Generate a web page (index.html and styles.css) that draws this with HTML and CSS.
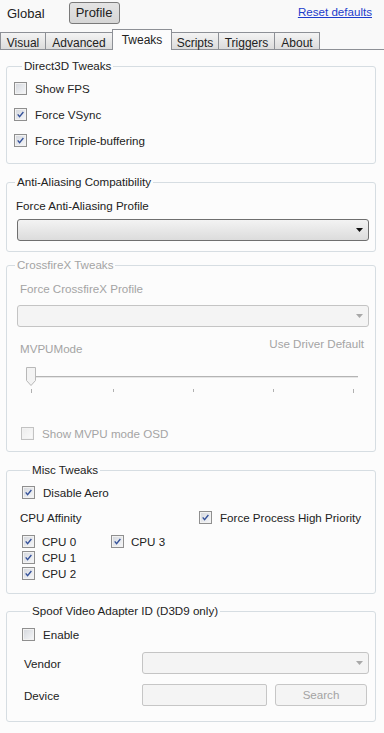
FILE: index.html
```html
<!DOCTYPE html>
<html lang="en">
<head>
  <meta charset="UTF-8" />
  <title>Tweaks</title>
  <link rel="stylesheet" href="styles.css">
</head>
<body>
  <div class="topbar">
    <span class="mode">Global</span>
    <span class="mode mode-active">Profile</span>
    <a class="reset" href="#">Reset defaults</a>
  </div>

  <div class="tabs">
    <div class="tab w-visual">Visual</div>
    <div class="tab w-advanced">Advanced</div>
    <div class="tab tab-active w-tweaks">Tweaks</div>
    <div class="tab w-scripts">Scripts</div>
    <div class="tab w-triggers">Triggers</div>
    <div class="tab w-about">About</div>
  </div>

  <div class="page">
    <fieldset class="group g-d3d">
      <legend>Direct3D Tweaks</legend>
      <label class="check row26"><span class="box"></span>Show FPS</label>
      <label class="check row26"><span class="box checked"><svg viewBox="0 0 13 13"><path d="M3.2 6.4 L5.4 9.2 L9.9 3.6"/></svg></span>Force VSync</label>
      <label class="check row26"><span class="box checked"><svg viewBox="0 0 13 13"><path d="M3.2 6.4 L5.4 9.2 L9.9 3.6"/></svg></span>Force Triple-buffering</label>
    </fieldset>

    <fieldset class="group g-aa">
      <legend>Anti-Aliasing Compatibility</legend>
      <div class="label">Force Anti-Aliasing Profile</div>
      <div class="combo combo-wide">
        <svg class="arrow" viewBox="0 0 7 4"><path d="M0 0 H7 L3.5 4 Z"/></svg>
      </div>
    </fieldset>

    <fieldset class="group g-cf disabled">
      <legend>CrossfireX Tweaks</legend>
      <div class="label">Force CrossfireX Profile</div>
      <div class="combo combo-wide">
        <svg class="arrow" viewBox="0 0 7 4"><path d="M0 0 H7 L3.5 4 Z"/></svg>
      </div>
      <div class="mvpu-row">
        <span class="mvpu-name">MVPUMode</span>
        <span>Use Driver Default</span>
      </div>
      <svg class="slider" width="338" height="30" viewBox="0 0 338 30">
        <line x1="6" y1="12.5" x2="334" y2="12.5" stroke="#b4b4b4"/>
        <line x1="6" y1="13.5" x2="334" y2="13.5" stroke="#e6e6e6"/>
        <path d="M2.5 3.5 H11.5 V16.5 L7 21.5 L2.5 16.5 Z" fill="#f3f3f3" stroke="#b8b8b8"/>
        <g stroke="#b0b0b0">
          <line x1="7.5" y1="25" x2="7.5" y2="29"/>
          <line x1="89.5" y1="25" x2="89.5" y2="28"/>
          <line x1="169.5" y1="25" x2="169.5" y2="28"/>
          <line x1="249.5" y1="25" x2="249.5" y2="28"/>
          <line x1="329.5" y1="25" x2="329.5" y2="29"/>
        </g>
      </svg>
      <label class="check osd"><span class="box"></span>Show MVPU mode OSD</label>
    </fieldset>

    <fieldset class="group g-misc">
      <legend>Misc Tweaks</legend>
      <label class="check row20"><span class="box checked"><svg viewBox="0 0 13 13"><path d="M3.2 6.4 L5.4 9.2 L9.9 3.6"/></svg></span>Disable Aero</label>
      <div class="affinity-row">
        <span class="affinity-label">CPU Affinity</span>
        <label class="check"><span class="box checked"><svg viewBox="0 0 13 13"><path d="M3.2 6.4 L5.4 9.2 L9.9 3.6"/></svg></span>Force Process High Priority</label>
      </div>
      <div class="cpu-grid">
        <label class="check cpu"><span class="box checked"><svg viewBox="0 0 13 13"><path d="M3.2 6.4 L5.4 9.2 L9.9 3.6"/></svg></span>CPU 0</label>
        <label class="check cpu"><span class="box checked"><svg viewBox="0 0 13 13"><path d="M3.2 6.4 L5.4 9.2 L9.9 3.6"/></svg></span>CPU 3</label>
        <label class="check cpu"><span class="box checked"><svg viewBox="0 0 13 13"><path d="M3.2 6.4 L5.4 9.2 L9.9 3.6"/></svg></span>CPU 1</label>
        <span></span>
        <label class="check cpu"><span class="box checked"><svg viewBox="0 0 13 13"><path d="M3.2 6.4 L5.4 9.2 L9.9 3.6"/></svg></span>CPU 2</label>
      </div>
    </fieldset>

    <fieldset class="group g-spoof">
      <legend>Spoof Video Adapter ID (D3D9 only)</legend>
      <label class="check row20"><span class="box"></span>Enable</label>
      <div class="field-row vendor">
        <span class="field-label">Vendor</span>
        <div class="combo combo-off combo-vendor">
          <svg class="arrow" viewBox="0 0 7 4"><path d="M0 0 H7 L3.5 4 Z"/></svg>
        </div>
      </div>
      <div class="field-row device">
        <span class="field-label">Device</span>
        <div class="textbox"></div>
        <div class="btn-off">Search</div>
      </div>
    </fieldset>
  </div>
</body>
</html>
```

FILE: styles.css
```css
* { box-sizing: border-box; }
body {
  margin: 0;
  width: 384px;
  height: 733px;
  overflow: hidden;
  font-family: "Liberation Sans", Arial, sans-serif;
  font-size: 11.6px;
  color: #222;
  background: #f9f9f9;
}

/* top bar */
.topbar {
  display: flex;
  align-items: center;
  height: 26px;
  padding: 0 12px 0 7px;
}
.mode { font-size: 13px; }
.mode-active {
  margin-left: 24px;
  width: 51px;
  height: 22px;
  line-height: 20px;
  text-align: center;
  border: 1px solid #7a7a7a;
  border-radius: 3px;
  background: linear-gradient(#e4e4e4, #d6d6d6);
  margin-top: -1px;
}
.reset {
  margin-left: auto;
  margin-top: -4px;
  color: #1d3ccc;
  font-size: 11.6px;
}

/* tabs */
.tabs {
  display: flex;
  align-items: flex-end;
  height: 21px;
  margin-top: 3px;
  border-bottom: 1px solid #8d9096;
}
.tab {
  height: 17px;
  padding-top: 3px;
  line-height: 14px;
  font-size: 12px;
  text-align: center;
  border: 1px solid #8d9096;
  border-bottom: none;
  margin-left: -1px;
  background: linear-gradient(#f4f4f4, #dcdcdc);
  color: #222;
}
.tab:first-child { margin-left: 0; }
.tab-active {
  height: 21px;
  margin-bottom: -1px;
  padding-top: 3px;
  background: #fcfcfc;
  position: relative;
  z-index: 1;
}
.w-visual { width: 46px; }
.w-advanced { width: 68px; }
.w-tweaks { width: 60px; }
.w-scripts { width: 48px; }
.w-triggers { width: 57px; }
.w-about { width: 46px; }

.page {
  background: #fcfcfc;
  padding-top: 9px;
  height: 683px;
}

/* group boxes */
.group {
  margin: 0 0 0 6px;
  width: 370px;
  padding: 0;
  border: 1px solid #d6dde2;
  border-radius: 3px;
  min-inline-size: 0;
}
.group legend {
  margin-left: 8px;
  padding: 0 2px;
  line-height: 14px;
}
.disabled, .disabled legend { color: #a4a4a4; }

.check {
  display: flex;
  align-items: center;
  gap: 8px;
}
.box {
  width: 13px;
  height: 13px;
  flex: none;
  border: 1px solid #8f8f8f;
  background: linear-gradient(135deg, #d3d6dc, #f7f8fa);
  box-shadow: inset 0 0 0 1px #f2f2f2;
  display: flex;
}
.box svg { width: 11px; height: 11px; }
.box path {
  fill: none;
  stroke: #34519a;
  stroke-width: 1.6;
}
.disabled .box {
  border-color: #c2c2c2;
  background: linear-gradient(135deg, #ececec, #fafafa);
}

.row26 { height: 26px; }
.row20 { height: 20px; }

.label { line-height: 14px; }

.combo {
  position: relative;
  height: 22px;
  border: 1px solid #6f6f6f;
  border-radius: 3px;
  background: linear-gradient(#f3f3f3, #dcdcdc);
}
.combo .arrow {
  position: absolute;
  right: 5px;
  top: 8px;
  width: 7px;
  height: 4px;
  fill: #111;
}
.combo-wide { width: 352px; margin-left: 10px; }
.disabled .combo, .combo-off {
  border-color: #c4c4c4;
  background: #f4f4f4;
}
.disabled .combo .arrow, .combo-off .arrow { fill: #a8a8a8; }

/* Direct3D */
.g-d3d { padding: 2px 0 10px 7px; }

/* AA */
.g-aa { margin-top: 11px; padding: 0 0 10px 0; }
.g-aa .label { margin: 10px 0 0 9px; }
.g-aa .combo { margin-top: 6px; }

/* CrossfireX */
.g-cf { margin-top: 6px; padding: 0 0 8px 0; }
.g-cf .label { margin: 10px 0 0 13px; }
.g-cf .combo { margin-top: 9px; }
.mvpu-row {
  display: flex;
  justify-content: space-between;
  align-items: flex-start;
  height: 19px;
  margin: 10px 11px 0 13px;
  line-height: 14px;
}
.mvpu-name { align-self: flex-end; }
.slider { display: block; margin: 8px 0 0 17px; }
.osd { margin: 29px 0 0 14px; height: 20px; }

/* Misc */
.g-misc { margin-top: 11px; padding: 5px 0 12px 15px; }
.affinity-row {
  display: flex;
  align-items: center;
  height: 20px;
  margin-top: 5px;
}
.affinity-label { width: 179px; margin-left: -2px; }
.cpu-grid {
  display: grid;
  grid-template-columns: 89px auto;
  margin-top: 6px;
}
.cpu { height: 16px; gap: 7px; }

/* Spoof */
.g-spoof { margin-top: 10px; padding: 6px 0 15px 15px; }
.field-row {
  display: flex;
  align-items: center;
}
.field-label { width: 120px; padding-left: 2px; }
.vendor { margin-top: 8px; }
.device { margin-top: 10px; }
.combo-vendor { width: 227px; }
.textbox {
  width: 125px;
  height: 22px;
  border: 1px solid #c6c6c6;
  border-radius: 2px;
  background: #f4f4f4;
}
.btn-off {
  width: 92px;
  height: 22px;
  margin-left: 8px;
  line-height: 20px;
  text-align: center;
  color: #a3a3a3;
  border: 1px solid #c6c6c6;
  border-radius: 3px;
  background: #f4f4f4;
}
```
